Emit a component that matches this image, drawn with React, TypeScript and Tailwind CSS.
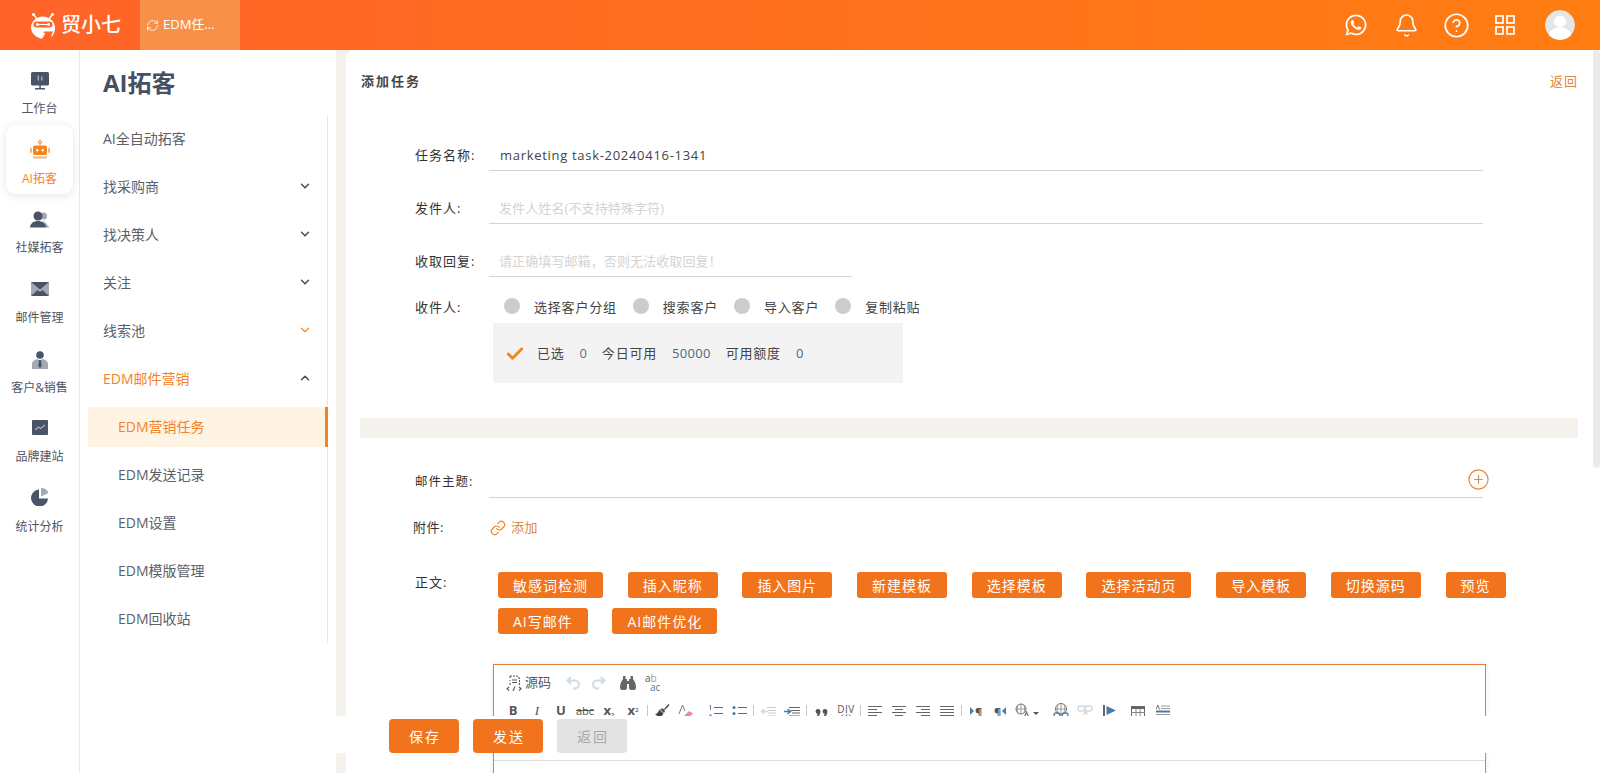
import React from "react";
import { Bell, ChevronDown, ChevronUp, CirclePlus, CircleHelp, Link as LinkIcon, RefreshCw, Check } from "lucide-react";
import { FaWhatsapp } from "react-icons/fa";

const Logo = () => (
  <svg width="26" height="27" viewBox="0 0 26 27" className="shrink-0">
    <circle cx="3.5" cy="2.5" r="1.6" fill="#fff" />
    <circle cx="22.5" cy="2.5" r="1.6" fill="#fff" />
    <path d="M4 3l3 4M22 3l-3 4" stroke="#fff" strokeWidth="1.4" />
    <path d="M13 4.500C6.500 4.500 1 9.500 1 15.500c0 5 4 9 9.500 11 1 .4 1.800 0 2.200-.8l3-5.200H20c2-1 3-1.500 3-1l-2.500 6C23.500 23.500 25 20 25 15.500 25 9.500 19.500 4.500 13 4.500z" fill="#fff" />
    <rect x="3.500" y="9.500" width="19" height="6" rx="3" fill="#ff6529" />
    <circle cx="7.500" cy="12.500" r="1.500" fill="#fff" />
    <circle cx="18.500" cy="12.500" r="1.500" fill="#fff" />
    <path d="M8 12.500h10" stroke="#fff" strokeWidth="1" />
    <path d="M14 19.500h7.500l-1 1.500h-7z" fill="#ff6529" />
  </svg>
);

const Grid = () => (
  <svg width="20" height="20" viewBox="0 0 20 20" fill="none" stroke="#fff" strokeWidth="1.700">
    <rect x="1" y="1" width="7" height="7" />
    <rect x="12" y="1" width="7" height="7" />
    <rect x="1" y="12" width="7" height="7" />
    <rect x="12" y="12" width="7" height="7" />
  </svg>
);

const Avatar = () => (
  <svg width="30" height="30" viewBox="0 0 30 30" className="rounded-full">
    <circle cx="15" cy="15" r="15" fill="#e6e6e6" />
    <circle cx="15" cy="11.500" r="6" fill="#fff" />
    <path d="M3 27c1-7 6-9.500 12-9.500s11 2.500 12 9.500a15 15 0 0 1-24 0z" fill="#fff" />
  </svg>
);

const D = "#4a5468";
const L = "#a4a9b3";

const railIcons: Record<string, React.ReactNode> = {
  monitor: (
    <svg width="20" height="20" viewBox="0 0 20 20">
      <rect x="1" y="1" width="18" height="13.500" rx="1.500" fill={D} />
      <rect x="7.500" y="4.500" width="1.500" height="5" fill={L} />
      <rect x="11" y="5.500" width="1.500" height="4" fill={L} />
      <rect x="9.300" y="14" width="1.500" height="3.500" fill={D} />
      <rect x="5" y="17" width="10" height="1.500" fill={D} />
    </svg>
  ),
  robot: (
    <svg width="22" height="20" viewBox="0 0 22 20" className="-mt-[2px]">
      <circle cx="11" cy="2" r="1.500" fill="none" stroke="#f5851f" strokeWidth="1" />
      <rect x="10.500" y="3" width="1" height="2.500" fill="#f5851f" />
      <rect x="4" y="5.500" width="14" height="9.500" rx="2" fill="#f5851f" />
      <circle cx="8.200" cy="10.200" r="1.200" fill="#fff" />
      <circle cx="13.800" cy="10.200" r="1.200" fill="#fff" />
      <rect x="1" y="7.500" width="2" height="5.500" rx="1" fill="#f9b27a" />
      <rect x="19" y="7.500" width="2" height="5.500" rx="1" fill="#f9b27a" />
      <rect x="4" y="16.500" width="14" height="2" rx="1" fill="#f9b27a" />
    </svg>
  ),
  users: (
    <svg width="20" height="18" viewBox="0 0 20 18">
      <circle cx="13.500" cy="5" r="3.500" fill={L} />
      <path d="M13 9l6.500 7.500h-4z" fill={L} />
      <circle cx="8" cy="5" r="4.500" fill={D} />
      <path d="M0 16.500C.5 12 4 10 8 10s7.500 2 8 6.500z" fill={D} />
    </svg>
  ),
  mail: (
    <svg width="18" height="14" viewBox="0 0 18 14" className="-mt-[2px]">
      <rect x="0" y="0" width="18" height="14" fill={L} />
      <path d="M0 0h18L9 7.500z" fill={D} />
      <path d="M0 14l6.500-6L9 10l2.500-2L18 14z" fill={D} />
    </svg>
  ),
  man: (
    <svg width="16" height="18" viewBox="0 0 16 18">
      <circle cx="8" cy="4" r="3.800" fill={D} />
      <path d="M0 18v-5c0-3 3-4.500 6-5l2 2 2-2c3 .5 6 2 6 5v5z" fill={L} />
      <path d="M7 9h2l.8 6L8 17l-1.800-2z" fill={D} />
    </svg>
  ),
  chart: (
    <svg width="16" height="15" viewBox="0 0 16 15" className="-mt-[4px]">
      <rect width="16" height="15" rx="1" fill={D} />
      <path d="M3 10l3.500-3 2 1.500L13 5" stroke={L} strokeWidth="1.300" fill="none" />
    </svg>
  ),
  pie: (
    <svg width="18" height="18" viewBox="0 0 18 18" className="-mt-[4px]">
      <path d="M8 1.500A8.500 8.500 0 1 0 17 10.500H8z" fill={D} />
      <path d="M10 0a8 8 0 0 1 7.500 5L10 8.500z" fill={L} />
    </svg>
  ),
};

const rail = [
  ["monitor", "工作台"],
  ["robot", "AI拓客"],
  ["users", "社媒拓客"],
  ["mail", "邮件管理"],
  ["man", "客户&销售"],
  ["chart", "品牌建站"],
  ["pie", "统计分析"],
];

const menu: [string, string, string][] = [
  ["AI全自动拓客", "", ""],
  ["找采购商", "down", ""],
  ["找决策人", "down", ""],
  ["关注", "down", ""],
  ["线索池", "orange", ""],
  ["EDM邮件营销", "up", "open"],
];
const sub = ["EDM营销任务", "EDM发送记录", "EDM设置", "EDM模版管理", "EDM回收站"];

const actions = ["敏感词检测", "插入昵称", "插入图片", "新建模板", "选择模板", "选择活动页", "导入模板", "切换源码", "预览", "AI写邮件", "AI邮件优化"];

const Cell = ({ children }: { children: React.ReactNode }) => (
  <div className="w-[24px] h-[18px] flex items-center justify-center shrink-0 text-[#555]">{children}</div>
);
const Sep = () => <div className="w-px h-[12px] bg-[#c8c8c8] mx-[2px] shrink-0" />;

const LinesIcon = ({ a }: { a: "l" | "c" | "r" | "j" }) => {
  const s = a === "j" ? [[0, 14], [0, 14], [0, 14], [0, 14]] : a === "c" ? [[0, 14], [3, 11], [0, 14], [3, 11]] : a === "r" ? [[0, 14], [5, 14], [0, 14], [5, 14]] : [[0, 14], [0, 9], [0, 14], [0, 9]];
  return (
    <svg width="14" height="10" viewBox="0 0 14 10" stroke="#666" strokeWidth="1">
      {s.map((p, i) => (
        <path key={i} d={`M${p[0]} ${i * 3 + 0.5}H${p[1]}`} />
      ))}
    </svg>
  );
};

const Toolbar = () => (
  <div className="h-[96px] border-b border-[#dddddd] pt-[9px]">
    <div className="flex items-center h-[18px] ml-[12px]">
      <svg width="16" height="17" viewBox="0 0 16 17" fill="none" stroke="#555" strokeWidth="1.100">
        <path d="M4 1h7l2.500 2.500V10M4 1v2M4 5v1M4 8v2" strokeDasharray="2 1" />
        <path d="M6 5h5M6 7.500h5" />
        <path d="M3 12l-2 1.800L3 15.500M13 12l2 1.800L13 15.500M9 11.500l-2 4.500" />
      </svg>
      <span className="ml-[3px] text-[13px] text-[#555]">源码</span>
      <svg width="16" height="14" viewBox="0 0 16 14" fill="none" stroke="#cddbe8" strokeWidth="2" className="ml-[15px]">
        <path d="M5 1L1.500 4.500 5 8M2 4.500h7a4 4 0 0 1 0 8H7" />
      </svg>
      <svg width="16" height="14" viewBox="0 0 16 14" fill="none" stroke="#cddbe8" strokeWidth="2" className="ml-[8px]">
        <path d="M11 1l3.500 3.500L11 8M14 4.500H7a4 4 0 0 0 0 8h2" />
      </svg>
      <svg width="16" height="15" viewBox="0 0 16 15" fill="#666" className="ml-[14px]">
        <path d="M3 0h2.500v3H7v8.500A2.500 2.500 0 0 1 4.500 14h-2A2.500 2.500 0 0 1 0 11.500C0 8 1 5.500 3 3zM13 0h-2.500v3H9v8.500a2.500 2.500 0 0 0 2.500 2.500h2a2.500 2.500 0 0 0 2.500-2.500C16 8 15 5.500 13 3z" />
        <rect x="7" y="5" width="2" height="3" />
      </svg>
      <div className="ml-[9px] w-[18px] flex flex-col items-start text-[10px]">
        <span className="h-[9px] leading-[9px] text-[#555]">a<span className="text-[#999]">b</span></span>
        <span className="h-[9px] leading-[9px] ml-[5px] text-[#4a7ba6]">ac</span>
      </div>
    </div>
    <div className="flex items-center h-[18px] mt-[10px] ml-[7px]">
      <Cell><span className="text-[13px] font-bold">B</span></Cell>
      <Cell><span className="text-[13px] italic font-['Liberation_Serif',serif]">I</span></Cell>
      <Cell><span className="text-[13px] font-bold">U</span></Cell>
      <Cell><span className="text-[11px] line-through">abc</span></Cell>
      <Cell><span className="text-[13px] font-bold">x<sub className="text-[6px] text-[#4a7ba6]">2</sub></span></Cell>
      <Cell><span className="text-[13px] font-bold">x<sup className="text-[6px] text-[#4a7ba6]">2</sup></span></Cell>
      <Sep />
      <Cell>
        <svg width="16" height="16" viewBox="0 0 16 16" fill="#444"><path d="M10 6l4.500-5 1 1-4.500 5zM9 5.500L11 8l-1 2-4-4zM5.500 6.500l4 4L6 15.500 1 11c2 0 3.500-2 4.500-4.500z" /></svg>
      </Cell>
      <Cell>
        <svg width="16" height="14" viewBox="0 0 16 14"><path d="M1 10L4.500 1 7 7" fill="none" stroke="#777" strokeWidth="1" /><path d="M6 12l5-5 4 2.500-4.500 4.500H8z" fill="#e88a9a" /></svg>
      </Cell>
      <div className="w-[5px] shrink-0" />
      <Cell>
        <svg width="15" height="13" viewBox="0 0 15 13"><path d="M6 2.500h9M6 8.500h9" stroke="#666" /><path d="M1.500 1l1-.5V5M1 10h2.500L1 12.500h3" stroke="#4a7ba6" strokeWidth="0.900" fill="none" /></svg>
      </Cell>
      <Cell>
        <svg width="15" height="12" viewBox="0 0 15 12"><path d="M6 2.500h9M6 8.500h9" stroke="#666" /><circle cx="2" cy="2.500" r="1.500" fill="#4a7ba6" /><circle cx="2" cy="8.500" r="1.500" fill="#4a7ba6" /></svg>
      </Cell>
      <Sep />
      <Cell>
        <svg width="16" height="11" viewBox="0 0 16 11"><path d="M7 1.500h9M8 4.500h8M8 7h8M7 10h9" stroke="#ccc" /><path d="M8 5.500H2M4.500 3L1.500 5.500 4.500 8" stroke="#cddbe8" strokeWidth="1.500" fill="none" /></svg>
      </Cell>
      <Cell>
        <svg width="16" height="11" viewBox="0 0 16 11"><path d="M5 1.500h11M7 4.500h9M8 7h8M5 10h11" stroke="#666" /><path d="M0 5.500h6M3.500 3l3 2.500-3 2.500" stroke="#4a7ba6" strokeWidth="1.500" fill="none" /></svg>
      </Cell>
      <Sep />
      <Cell>
        <svg width="13" height="9" viewBox="0 0 13 9" fill="#555" className="mt-[5px]">
          <circle cx="3" cy="2.500" r="2.400" /><path d="M5.400 2.500c0 2.800-1.500 5-4 6l.8-2.800z" />
          <circle cx="10" cy="2.500" r="2.400" /><path d="M12.400 2.500c0 2.800-1.500 5-4 6l.8-2.800z" />
        </svg>
      </Cell>
      <div className="w-px shrink-0" />
      <Cell>
        <div className="flex flex-col items-center">
          <span className="text-[10px] leading-[10px] tracking-[0.5px]">DIV</span>
          <svg width="12" height="5" viewBox="0 0 12 5" fill="none" stroke="#555"><path d="M3 .5L1 2.500 3 4.500M9 .5l2 2-2 2M7 .5L5 4.500" /></svg>
        </div>
      </Cell>
      <Sep />
      <Cell><LinesIcon a="l" /></Cell>
      <Cell><LinesIcon a="c" /></Cell>
      <Cell><LinesIcon a="r" /></Cell>
      <Cell><LinesIcon a="j" /></Cell>
      <Sep />
      <Cell>
        <svg width="4" height="8" viewBox="0 0 4 8"><path d="M0 0l4 4-4 4z" fill="#4a7ba6" /></svg>
        <span className="text-[11px] leading-none font-bold ml-px">¶</span>
      </Cell>
      <Cell>
        <span className="text-[11px] leading-none font-bold mr-px">¶</span>
        <svg width="4" height="8" viewBox="0 0 4 8"><path d="M4 0L0 4l4 4z" fill="#4a7ba6" /></svg>
      </Cell>
      <div className="w-[3px] shrink-0" />
      <Cell>
        <svg width="24" height="16" viewBox="0 0 24 16" fill="none">
          <circle cx="6" cy="6" r="5" stroke="#777" />
          <path d="M1 6h10M6 1v10M3 2c-1 3-1 5 0 8M9 2c1 3 1 5 0 8" stroke="#777" strokeWidth="0.700" />
          <path d="M9 15l2.500-6 2.500 6" stroke="#4a7ba6" strokeWidth="1.200" />
          <path d="M18 9h6l-3 3z" fill="#555" />
        </svg>
      </Cell>
      <div className="w-[10px] shrink-0" />
      <Cell>
        <svg width="16" height="16" viewBox="0 0 16 16" fill="none">
          <circle cx="8" cy="6" r="5.500" stroke="#777" />
          <path d="M2.500 6h11M8 .5v11M5 1.500c-1 3-1 5 0 8M11 1.500c1 3 1 5 0 8" stroke="#777" strokeWidth="0.700" />
          <rect x="1" y="10" width="6" height="4" rx="2" stroke="#4a7ba6" strokeWidth="1.300" />
          <rect x="9" y="10" width="6" height="4" rx="2" stroke="#4a7ba6" strokeWidth="1.300" />
        </svg>
      </Cell>
      <Cell>
        <svg width="16" height="13" viewBox="0 0 16 13" fill="none">
          <rect x="1" y="1" width="7" height="5" rx="2.500" stroke="#cddbe8" strokeWidth="1.500" />
          <rect x="8" y="1" width="7" height="5" rx="2.500" stroke="#cddbe8" strokeWidth="1.500" />
          <path d="M8 5l-2 6 3-2.500 3 1.500z" fill="#f0c8b8" />
        </svg>
      </Cell>
      <div className="w-px shrink-0" />
      <Cell>
        <svg width="14" height="12" viewBox="0 0 14 12"><rect width="2" height="12" fill="#666" /><path d="M3.500 1L13 5.500 3.500 10z" fill="#4a7ba6" /></svg>
      </Cell>
      <div className="w-[4px] shrink-0" />
      <Cell>
        <svg width="14" height="11" viewBox="0 0 14 11" fill="none"><rect x=".5" y=".5" width="13" height="10" stroke="#666" /><rect width="14" height="3" fill="#666" /><path d="M5 3v8M9 3v8M0 6.500h14" stroke="#888" /></svg>
      </Cell>
      <div className="w-px shrink-0" />
      <Cell>
        <svg width="14" height="12" viewBox="0 0 14 12"><path d="M0 4.500L1.800 0l1.800 4.500" stroke="#555" strokeWidth="0.800" fill="none" /><path d="M5 1h9M5 3.500h9M0 9.500h14" stroke="#999" /><rect y="5.500" width="14" height="2" fill="#4a7ba6" /></svg>
      </Cell>
    </div>
  </div>
);

export default function App() {
  return (
    <div className="relative w-[1600px] h-[773px] overflow-hidden bg-white font-['Open_Sans','Noto_Sans_CJK_SC',sans-serif] text-[13px] text-[#333]">
      <header className="h-[50px] flex bg-[linear-gradient(90deg,#ff6329,#ff7d12)] text-white">
        <div className="w-[140px] flex items-center pl-[30px] gap-[5px]">
          <Logo />
          <span className="text-[20px] leading-none font-medium">贸小七</span>
        </div>
        <div className="w-[100px] bg-[#f79049] flex items-center pl-[6px] gap-[4px] text-[13px]">
          <RefreshCw size={13} strokeWidth={1.500} />
          <span>EDM任...</span>
        </div>
        <div className="flex-1 flex items-center justify-end pr-[25px]">
          <FaWhatsapp size={24} className="mr-[26px]" />
          <Bell size={25} strokeWidth={1.500} className="mr-[24px]" />
          <CircleHelp size={27} strokeWidth={1.500} className="mr-[25px]" />
          <div className="mr-[30px]"><Grid /></div>
          <Avatar />
        </div>
      </header>

      <div className="flex h-[723px]">
        <aside className="w-[80px] shrink-0 border-r border-[#e8e8e8] pt-[5px] px-[6px]">
          {rail.map(([icon, label], i) => (
            <div key={label} className={`h-[69.7px] flex flex-col items-center ${i === 1 ? "bg-white rounded-[10px] shadow-[0_2px_10px_rgba(0,0,0,0.1)] text-[#f5822a]" : "text-[#4f5561]"}`}>
              <div className="h-[24px] mt-[14px] flex items-center justify-center">{railIcons[icon]}</div>
              <div className="mt-[6px] text-[12px] leading-[20px] whitespace-nowrap">{label}</div>
            </div>
          ))}
        </aside>

        <nav className="w-[256px] shrink-0">
          <div className="h-[65px] pl-[23px] pt-[16px] text-[24px] leading-[34px] font-bold text-[#465062]">AI拓客</div>
          <div className="ml-[8px] w-[240px] flex flex-col border-r border-[#e6e6e6] text-[14px] text-[#5a5f69]">
            {menu.map(([label, arrow, open]) => (
              <div key={label} className={`h-[40px] my-[4px] pl-[15px] pr-[15px] pb-[2px] flex items-center justify-between ${open ? "text-[#f5822a]" : ""}`}>
                <span>{label}</span>
                {arrow === "down" && <ChevronDown size={14} strokeWidth={2.500} className="text-[#444b58]" />}
                {arrow === "orange" && <ChevronDown size={14} strokeWidth={2.500} className="text-[#f5913a]" />}
                {arrow === "up" && <ChevronUp size={14} strokeWidth={2.500} className="text-[#444b58]" />}
              </div>
            ))}
            {sub.map((label, i) => (
              <div key={label} className={`h-[40px] my-[4px] pl-[30px] pb-[2px] flex items-center ${i === 0 ? "bg-[#fff4e3] text-[#f5822a] border-r-[3px] border-[#f5821e] -mr-px" : ""}`}>
                {label}
              </div>
            ))}
          </div>
        </nav>

        <main className="flex-1 bg-[#f5f1ec] pl-[10px] overflow-hidden">
          <div className="h-full bg-white rounded-tl-[8px] overflow-hidden flow-root">
            <div className="flex justify-between h-[22px] mt-[21px] pl-[15px] pr-[22px] items-center">
              <span className="font-bold text-[#444] tracking-[2px]">添加任务</span>
              <span className="text-[#e0883f] tracking-[1px]">返回</span>
            </div>

            <div className="flex h-[30px] mt-[48px] ml-[69px]">
              <label className="w-[74px] flex items-center tracking-[1px]">任务名称:</label>
              <div className="w-[994px] border-b border-[#d4d4d4] pl-[11px] flex items-center tracking-[0.700px] text-[#444]">marketing task-20240416-1341</div>
            </div>
            <div className="flex h-[30px] mt-[23px] ml-[69px]">
              <label className="w-[74px] flex items-center tracking-[1px]">发件人:</label>
              <div className="w-[994px] border-b border-[#d4d4d4] pl-[10px] flex items-center tracking-[0.100px] text-[#d4d4d4]">发件人姓名(不支持特殊字符)</div>
            </div>
            <div className="flex h-[30px] mt-[23px] ml-[69px]">
              <label className="w-[74px] flex items-center tracking-[1px]">收取回复:</label>
              <div className="w-[363px] border-b border-[#d4d4d4] pl-[10px] flex items-center tracking-[0.100px] text-[#d4d4d4]">请正确填写邮箱，否则无法收取回复！</div>
            </div>

            <div className="flex h-[20px] mt-[21px] ml-[69px] items-center">
              <label className="w-[74px] tracking-[1px]">收件人:</label>
              <div className="flex items-center ml-[15px] tracking-[0.800px] text-[#444]">
                <span className="w-[16px] h-[16px] rounded-full bg-[#cccccc] -mt-[4px]" />
                <span className="ml-[14px]">选择客户分组</span>
                <span className="w-[16px] h-[16px] rounded-full bg-[#cccccc] -mt-[4px] ml-[16px]" />
                <span className="ml-[14px]">搜索客户</span>
                <span className="w-[16px] h-[16px] rounded-full bg-[#cccccc] -mt-[4px] ml-[16px]" />
                <span className="ml-[14px]">导入客户</span>
                <span className="w-[16px] h-[16px] rounded-full bg-[#cccccc] -mt-[4px] ml-[16px]" />
                <span className="ml-[14px]">复制粘贴</span>
              </div>
            </div>

            <div className="ml-[147px] mt-[5px] w-[410px] h-[60px] bg-[#f3f3f3] flex items-center pt-[1px] pl-[12px] tracking-[0.800px] text-[#444]">
              <Check size={20} strokeWidth={3.500} className="text-[#f0861f]" />
              <span className="ml-[12px]">已选</span>
              <span className="ml-[15px] text-[#5c7080]">0</span>
              <span className="ml-[14px]">今日可用</span>
              <span className="ml-[15px] text-[#4a6a84] tracking-[0.300px]">50000</span>
              <span className="ml-[15px]">可用额度</span>
              <span className="ml-[15px] text-[#4a6a84]">0</span>
            </div>

            <div className="ml-[14px] mt-[35px] w-[1218px] h-[20px] bg-[#f5f1ec]" />

            <div className="flex h-[31px] mt-[29px] ml-[69px]">
              <label className="w-[74px] flex items-center tracking-[1px] text-[12.500px]">邮件主题:</label>
              <div className="w-[994px] border-b border-[#d4d4d4] flex items-center justify-end">
                <CirclePlus size={23} strokeWidth={1.200} className="text-[#e0883f] -mr-[7px] -mt-[6px]" />
              </div>
            </div>

            <div className="flex h-[20px] mt-[20px] ml-[67px] items-center">
              <label className="w-[76px] tracking-[0.500px]">附件:</label>
              <LinkIcon size={16} strokeWidth={1.800} className="text-[#f0861f] ml-px" />
              <span className="ml-[5px] text-[#e0883f] tracking-[0.500px]">添加</span>
            </div>

            <div className="flex mt-[34px] ml-[69px]">
              <label className="w-[83px] h-[22px] flex items-center tracking-[1px]">正文:</label>
              <div className="w-[1012px] flex flex-wrap gap-x-[24.700px] gap-y-[10px]">
                {actions.map((a) => (
                  <span key={a} className="h-[26px] px-[15px] rounded-[3px] bg-[#f1741d] text-white text-[14px] tracking-[1px] flex items-center whitespace-nowrap">{a}</span>
                ))}
              </div>
            </div>

            <div className="ml-[147px] mt-[30px] w-[993px] h-[200px] border border-[#e0803c] shadow-[0_0_4px_rgba(0,0,0,0.1)]">
              <Toolbar />
            </div>
          </div>
        </main>
      </div>

      <div className="absolute left-[336px] right-0 top-[716px] h-[37px] bg-white flex items-end pl-[53px] gap-[14px] text-[14px] tracking-[2px]">
        <span className="w-[70px] h-[34px] pl-[2px] rounded-[4px] bg-[#f1741d] text-white flex items-center justify-center">保存</span>
        <span className="w-[70px] h-[34px] pl-[2px] rounded-[4px] bg-[#f1741d] text-white flex items-center justify-center">发送</span>
        <span className="w-[70px] h-[34px] pl-[2px] rounded-[4px] bg-[#e3e3e3] text-[#a8a8a8] flex items-center justify-center">返回</span>
      </div>
      <div className="absolute right-0 top-[50px] w-[7px] h-[418px] bg-[#ebebeb] rounded-full" />
    </div>
  );
}
